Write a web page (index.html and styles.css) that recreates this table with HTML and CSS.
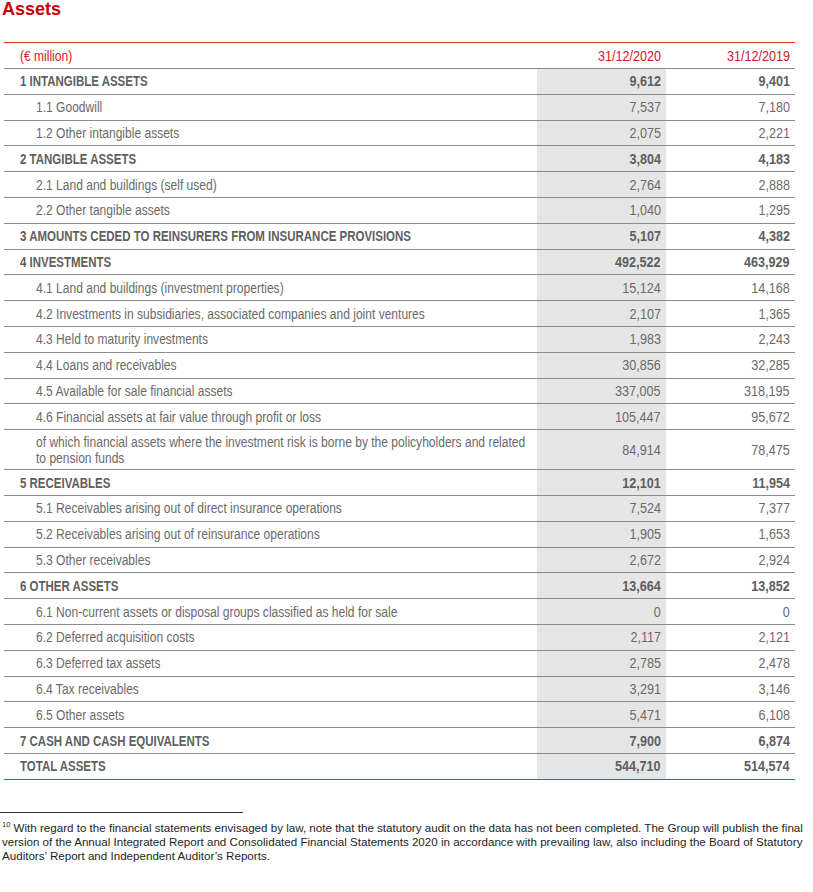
FILE: index.html
```html
<!DOCTYPE html>
<html>
<head>
<meta charset="utf-8">
<link rel="stylesheet" href="styles.css">
</head>
<body>
<h1 class="title">Assets</h1>
<table class="fin">
  <thead>
    <tr><th class="lbl"><span class="t">(€ million)</span></th><th class="num"><span class="n">31/12/2020</span></th><th class="num"><span class="n">31/12/2019</span></th></tr>
  </thead>
  <tbody>
    <tr class="b"><td class="lbl"><span class="t">1 INTANGIBLE ASSETS</span></td><td class="num cur"><span class="n">9,612</span></td><td class="num"><span class="n">9,401</span></td></tr>
    <tr><td class="lbl sub"><span class="t">1.1 Goodwill</span></td><td class="num cur"><span class="n">7,537</span></td><td class="num"><span class="n">7,180</span></td></tr>
    <tr><td class="lbl sub"><span class="t">1.2 Other intangible assets</span></td><td class="num cur"><span class="n">2,075</span></td><td class="num"><span class="n">2,221</span></td></tr>
    <tr class="b"><td class="lbl"><span class="t">2 TANGIBLE ASSETS</span></td><td class="num cur"><span class="n">3,804</span></td><td class="num"><span class="n">4,183</span></td></tr>
    <tr><td class="lbl sub"><span class="t">2.1 Land and buildings (self used)</span></td><td class="num cur"><span class="n">2,764</span></td><td class="num"><span class="n">2,888</span></td></tr>
    <tr><td class="lbl sub"><span class="t">2.2 Other tangible assets</span></td><td class="num cur"><span class="n">1,040</span></td><td class="num"><span class="n">1,295</span></td></tr>
    <tr class="b"><td class="lbl"><span class="t">3 AMOUNTS CEDED TO REINSURERS FROM INSURANCE PROVISIONS</span></td><td class="num cur"><span class="n">5,107</span></td><td class="num"><span class="n">4,382</span></td></tr>
    <tr class="b"><td class="lbl"><span class="t">4 INVESTMENTS</span></td><td class="num cur"><span class="n">492,522</span></td><td class="num"><span class="n">463,929</span></td></tr>
    <tr><td class="lbl sub"><span class="t">4.1 Land and buildings (investment properties)</span></td><td class="num cur"><span class="n">15,124</span></td><td class="num"><span class="n">14,168</span></td></tr>
    <tr><td class="lbl sub"><span class="t">4.2 Investments in subsidiaries, associated companies and joint ventures</span></td><td class="num cur"><span class="n">2,107</span></td><td class="num"><span class="n">1,365</span></td></tr>
    <tr><td class="lbl sub"><span class="t">4.3 Held to maturity investments</span></td><td class="num cur"><span class="n">1,983</span></td><td class="num"><span class="n">2,243</span></td></tr>
    <tr><td class="lbl sub"><span class="t">4.4 Loans and receivables</span></td><td class="num cur"><span class="n">30,856</span></td><td class="num"><span class="n">32,285</span></td></tr>
    <tr><td class="lbl sub"><span class="t">4.5 Available for sale financial assets</span></td><td class="num cur"><span class="n">337,005</span></td><td class="num"><span class="n">318,195</span></td></tr>
    <tr><td class="lbl sub"><span class="t">4.6 Financial assets at fair value through profit or loss</span></td><td class="num cur"><span class="n">105,447</span></td><td class="num"><span class="n">95,672</span></td></tr>
    <tr class="tall"><td class="lbl sub"><span class="t">of which financial assets where the investment risk is borne by the policyholders and related<br>to pension funds</span></td><td class="num cur"><span class="n">84,914</span></td><td class="num"><span class="n">78,475</span></td></tr>
    <tr class="b"><td class="lbl"><span class="t">5 RECEIVABLES</span></td><td class="num cur"><span class="n">12,101</span></td><td class="num"><span class="n">11,954</span></td></tr>
    <tr><td class="lbl sub"><span class="t">5.1 Receivables arising out of direct insurance operations</span></td><td class="num cur"><span class="n">7,524</span></td><td class="num"><span class="n">7,377</span></td></tr>
    <tr><td class="lbl sub"><span class="t">5.2 Receivables arising out of reinsurance operations</span></td><td class="num cur"><span class="n">1,905</span></td><td class="num"><span class="n">1,653</span></td></tr>
    <tr><td class="lbl sub"><span class="t">5.3 Other receivables</span></td><td class="num cur"><span class="n">2,672</span></td><td class="num"><span class="n">2,924</span></td></tr>
    <tr class="b"><td class="lbl"><span class="t">6 OTHER ASSETS</span></td><td class="num cur"><span class="n">13,664</span></td><td class="num"><span class="n">13,852</span></td></tr>
    <tr><td class="lbl sub"><span class="t">6.1 Non-current assets or disposal groups classified as held for sale</span></td><td class="num cur"><span class="n">0</span></td><td class="num"><span class="n">0</span></td></tr>
    <tr><td class="lbl sub"><span class="t">6.2 Deferred acquisition costs</span></td><td class="num cur"><span class="n">2,117</span></td><td class="num"><span class="n">2,121</span></td></tr>
    <tr><td class="lbl sub"><span class="t">6.3 Deferred tax assets</span></td><td class="num cur"><span class="n">2,785</span></td><td class="num"><span class="n">2,478</span></td></tr>
    <tr><td class="lbl sub"><span class="t">6.4 Tax receivables</span></td><td class="num cur"><span class="n">3,291</span></td><td class="num"><span class="n">3,146</span></td></tr>
    <tr><td class="lbl sub"><span class="t">6.5 Other assets</span></td><td class="num cur"><span class="n">5,471</span></td><td class="num"><span class="n">6,108</span></td></tr>
    <tr class="b"><td class="lbl"><span class="t">7 CASH AND CASH EQUIVALENTS</span></td><td class="num cur"><span class="n">7,900</span></td><td class="num"><span class="n">6,874</span></td></tr>
    <tr class="b last"><td class="lbl"><span class="t">TOTAL ASSETS</span></td><td class="num cur"><span class="n">544,710</span></td><td class="num"><span class="n">514,574</span></td></tr>
  </tbody>
</table>
<div class="footnote">
  <div class="rule"></div>
  <p class="note"><sup>10</sup> With regard to the financial statements envisaged by law, note that the statutory audit on the data has not been completed. The Group will publish the final version of the Annual Integrated Report and Consolidated Financial Statements 2020 in accordance with prevailing law, also including the Board of Statutory Auditors’ Report and Independent Auditor’s Reports.</p>
</div>
</body>
</html>
```
FILE: styles.css
```css
html, body {
  margin: 0;
  padding: 0;
  background: #ffffff;
}
body {
  width: 813px;
  height: 892px;
  overflow: hidden;
}
.title {
  margin: 0;
  padding: 0 0 0 2px;
  font-family: "Liberation Sans", Arial, sans-serif;
  font-weight: bold;
  font-size: 18px;
  line-height: 18px;
  color: #c8000a;
}
.fin {
  margin: 24px 0 0 4px;
  width: 791px;
  table-layout: fixed;
  border-collapse: collapse;
  font-family: "Liberation Sans", Arial, sans-serif;
  font-size: 14px;
  color: #6a6a6a;
}
.fin th, .fin td {
  padding: 0;
  height: 24.8px;
  line-height: 16px;
  vertical-align: middle;
  border-bottom: 1px solid #8c8c8c;
  white-space: nowrap;
}
.fin thead th {
  height: 25px;
  color: #d0202a;
  font-weight: normal;
  border-top: 1px solid #e0302a;
  border-bottom: 1px solid #8c8c8c;
}
.fin .lbl {
  text-align: left;
  padding-left: 16px;
  width: 517px;
}
.fin .lbl.sub {
  padding-left: 32px;
}
.fin .num {
  text-align: right;
  padding-right: 5px;
  width: 124px;
}
.fin .cur {
  background: #e6e6e6;
}
.t {
  display: inline-block;
  transform: scaleX(0.86);
  transform-origin: left center;
}
.n {
  display: inline-block;
  transform: scaleX(0.9);
  transform-origin: right center;
}
.fin tr.b td {
  font-weight: bold;
  color: #5f5f5f;
}
.fin tr.b .t {
  transform: scaleX(0.82);
}
.fin tr.tall td {
  height: 39px;
  line-height: 16px;
}
.fin tr.last td {
  border-bottom: 1px solid #d9302a;
}
.footnote {
  margin-top: 32px;
}
.rule {
  width: 243px;
  height: 1px;
  background: #333333;
}
.note {
  margin: 8px 0 0 2px;
  width: 811px;
  font-family: "Liberation Sans", Arial, sans-serif;
  font-size: 11.6px;
  line-height: 14px;
  color: #1e1e1e;
}
.note sup {
  font-size: 7.5px;
  vertical-align: 5px;
  line-height: 0;
}
```
